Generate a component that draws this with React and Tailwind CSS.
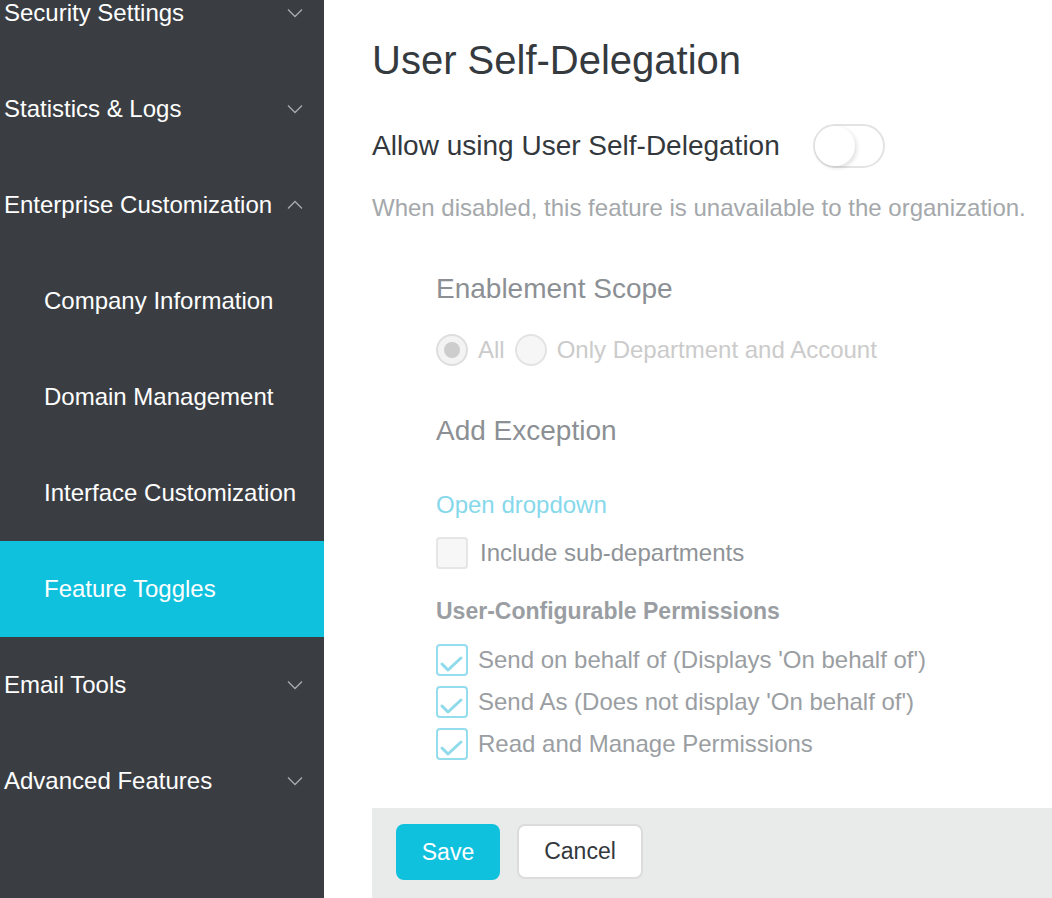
import React from "react";

const font = { fontFamily: '"Liberation Sans", Arial, sans-serif' };

function Chevron({ up }) {
  return (
    <svg width="16" height="10" viewBox="0 0 16 10" className="shrink-0">
      <polyline
        points={up ? "1,8.5 8,1.5 15,8.5" : "1,1.5 8,8.5 15,1.5"}
        fill="none"
        stroke="#a9adb1"
        strokeWidth="1.3"
      />
    </svg>
  );
}

function NavItem({ label, sub, active, chevron }) {
  return (
    <div
      className={`h-[96px] flex items-center justify-between pr-[21px] ${
        sub ? "pl-[44px]" : "pl-[4px]"
      } ${active ? "bg-[#10c1de]" : ""}`}
    >
      <span className="text-[24px] leading-[30px] text-white">{label}</span>
      {chevron && <Chevron up={chevron === "up"} />}
    </div>
  );
}

function CheckedBox({ label }) {
  return (
    <div className="flex items-center h-[32px] gap-[10px]">
      <div className="w-[32px] h-[32px] rounded-[4px] border-2 border-[#95dcec] flex items-end justify-center bg-white">
        <svg width="26" height="22" viewBox="0 0 26 22">
          <polyline
            points="3,12 9,18 22,6"
            fill="none"
            stroke="#8fdaeb"
            strokeWidth="3"
            strokeLinecap="round"
            strokeLinejoin="round"
          />
        </svg>
      </div>
      <span className="text-[24px] leading-[30px] text-[#9a9ea2]">{label}</span>
    </div>
  );
}

export default function App() {
  return (
    <div className="flex w-[1052px] h-[898px] overflow-hidden bg-white" style={font}>
      <aside className="w-[324px] shrink-0 bg-[#3a3e43] h-full overflow-hidden">
        <div className="-mt-[35px]">
          <NavItem label="Security Settings" chevron="down" />
          <NavItem label="Statistics & Logs" chevron="down" />
          <NavItem label="Enterprise Customization" chevron="up" />
          <NavItem label="Company Information" sub />
          <NavItem label="Domain Management" sub />
          <NavItem label="Interface Customization" sub />
          <NavItem label="Feature Toggles" sub active />
          <NavItem label="Email Tools" chevron="down" />
          <NavItem label="Advanced Features" chevron="down" />
        </div>
      </aside>

      <main className="flex-1 pl-[48px] flex flex-col">
        <h1 className="mt-[36px] text-[40px] leading-[48px] text-[#353a3f]">User Self-Delegation</h1>

        <div className="mt-[40px] flex items-center h-[44px]">
          <span className="text-[28px] leading-[34px] text-[#33383d]">Allow using User Self-Delegation</span>
          <div className="ml-[33px] w-[72px] h-[44px] rounded-full border-2 border-[#e3e3e3] bg-white relative">
            <div className="absolute left-0 top-0 w-[40px] h-[40px] rounded-full bg-white shadow-[2px_2px_4px_rgba(0,0,0,0.12)]" />
          </div>
        </div>

        <p className="mt-[26px] text-[24px] leading-[28px] text-[#a4a8ab]">
          When disabled, this feature is unavailable to the organization.
        </p>

        <div className="pl-[64px] flex flex-col">
          <h2 className="mt-[51px] text-[28px] leading-[32px] text-[#8c9094]">Enablement Scope</h2>

          <div className="mt-[29px] flex items-center h-[32px]">
            <div className="w-[32px] h-[32px] rounded-full border-2 border-[#dedede] bg-[#f3f3f3] flex items-center justify-center">
              <div className="w-[16px] h-[16px] rounded-full bg-[#cdcdcd]" />
            </div>
            <span className="ml-[10px] text-[24px] leading-[30px] text-[#cbcbcb]">All</span>
            <div className="ml-[10px] w-[32px] h-[32px] rounded-full border-2 border-[#e3e3e3] bg-[#f6f6f6]" />
            <span className="ml-[10px] text-[24px] leading-[30px] text-[#cbcbcb]">Only Department and Account</span>
          </div>

          <h2 className="mt-[49px] text-[28px] leading-[32px] text-[#8c9094]">Add Exception</h2>

          <a className="mt-[44px] text-[24px] leading-[28px] text-[#86d8eb]">Open dropdown</a>

          <div className="mt-[18px] flex items-center h-[32px] gap-[12px]">
            <div className="w-[32px] h-[32px] rounded-[4px] border-2 border-[#e6e6e6] bg-[#f7f7f7]" />
            <span className="text-[24px] leading-[30px] text-[#8f9397]">Include sub-departments</span>
          </div>

          <h3 className="mt-[28px] text-[23px] leading-[28px] font-bold text-[#9a9ea2]">
            User-Configurable Permissions
          </h3>

          <div className="mt-[19px] flex flex-col gap-[10px]">
            <CheckedBox label="Send on behalf of (Displays 'On behalf of')" />
            <CheckedBox label="Send As (Does not display 'On behalf of')" />
            <CheckedBox label="Read and Manage Permissions" />
          </div>
        </div>

        <div className="mt-[48px] h-[90px] bg-[#e9eaea] pl-[24px] pt-[16px] flex items-start gap-[17px]">
          <button className="w-[104px] h-[56px] rounded-[8px] bg-[#10c1de] text-white text-[23px]">Save</button>
          <button className="w-[126px] h-[55px] rounded-[8px] bg-white border-2 border-[#dcdcdc] text-[#33383d] text-[23px]">
            Cancel
          </button>
        </div>
      </main>
    </div>
  );
}
